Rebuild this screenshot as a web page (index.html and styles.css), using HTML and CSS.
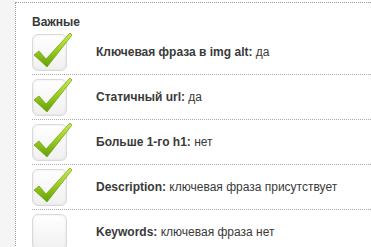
FILE: index.html
```html
<!DOCTYPE html>
<html lang="ru">

<head>
    <meta charset="UTF-8">
    <title>Важные</title>
    <link rel="stylesheet" href="styles.css">
</head>

<body>
    <div class="page">
        <div class="side"></div>
        <div class="panel">
            <div class="panel-title">Важные</div>

            <div class="row">
                <div class="check checked">
                    <svg viewBox="0 0 40 40"><use href="#tick"></use></svg>
                </div>
                <div class="label"><b>Ключевая фраза в img alt:</b> да</div>
            </div>
            <div class="row">
                <div class="check checked">
                    <svg viewBox="0 0 40 40"><use href="#tick"></use></svg>
                </div>
                <div class="label"><b>Статичный url:</b> да</div>
            </div>
            <div class="row">
                <div class="check checked">
                    <svg viewBox="0 0 40 40"><use href="#tick"></use></svg>
                </div>
                <div class="label"><b>Больше 1-го h1:</b> нет</div>
            </div>
            <div class="row">
                <div class="check checked">
                    <svg viewBox="0 0 40 40"><use href="#tick"></use></svg>
                </div>
                <div class="label"><b>Description:</b> ключевая фраза присутствует</div>
            </div>
            <div class="row">
                <div class="check"></div>
                <div class="label"><b>Keywords:</b> ключевая фраза нет</div>
            </div>
        </div>
    </div>

    <!-- галочка -->
    <svg width="0" height="0" class="defs">
        <defs>
            <linearGradient id="tickGrad" x1="0" y1="0" x2="0" y2="1">
                <stop offset="0" stop-color="#cbee55" />
                <stop offset="0.5" stop-color="#9bcc22" />
                <stop offset="1" stop-color="#629e08" />
            </linearGradient>
            <g id="tick">
                <path d="M2 21 L7 17 L14 25 L38 -1 L40 1 L15 33 Z" fill="url(#tickGrad)" stroke="#72a612" stroke-width="0.8" stroke-linejoin="round" />
            </g>
        </defs>
    </svg>
</body>

</html>
```

FILE: styles.css
```css
body {
    margin: 0;
    font-family: "Liberation Sans", Arial, sans-serif;
    font-size: 12px;
    color: #3a3a3a;
    background-color: #fff;
}

.page {
    display: flex;
    min-height: 247px;
}

.side {
    width: 15px;
    background-color: #f5f5f5;
}

.panel {
    flex: 1;
    margin-top: 2px;
    border-top: 1px dotted #999;
    border-left: 1px dotted #999;
    padding-left: 16px;
}

.panel-title {
    padding-top: 12px;
    line-height: 15px;
    font-weight: bold;
}

.row {
    display: flex;
    align-items: center;
    height: 44px;
    border-bottom: 1px dotted #aaa;
    gap: 29px;
}

.row:last-child {
    border-bottom: none;
}

.check {
    position: relative;
    width: 33px;
    height: 35px;
    border: 1px solid #d9d9d9;
    border-radius: 6px;
    background: linear-gradient(#ffffff, #f0f0f0);
    box-shadow: inset 0 0 3px rgba(0, 0, 0, 0.08);
    flex-shrink: 0;
}

.check svg {
    position: absolute;
    left: -1px;
    top: -1px;
    width: 40px;
    height: 40px;
    overflow: visible;
}

.defs {
    position: absolute;
}
```
